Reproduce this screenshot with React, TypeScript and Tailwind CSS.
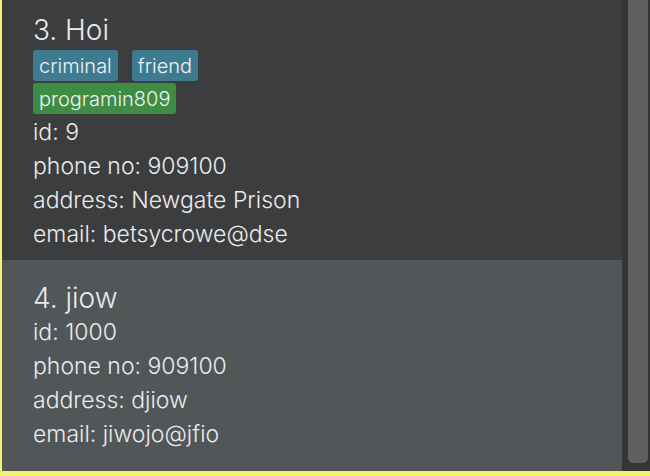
import React from "react";

const font = { fontFamily: "Inter, 'Noto Sans', sans-serif" };

function Tag({ label, color }: { label: string; color: "blue" | "green" }) {
  return (
    <span
      className={
        "inline-flex items-center h-[31px] px-[6px] rounded-[3px] text-[20px] font-light text-[#eef2f2] leading-none " +
        (color === "blue" ? "bg-[#3e7b91]" : "bg-[#3f8c45]")
      }
    >
      {label}
    </span>
  );
}

function Line({ children }: { children: React.ReactNode }) {
  return <div className="h-[34px] flex items-center text-[23px] font-light">{children}</div>;
}

export default function App() {
  return (
    <div className="w-[650px] h-[476px] bg-[#f5f26b] pl-[2px] pb-[5px] flex text-[#ebebeb]" style={font}>
      <div className="flex-1 flex flex-col overflow-hidden">
        <div className="h-[260px] bg-[#3c3d3f] pl-[31px] pt-[13px] flex flex-col">
          <div className="h-[34px] flex items-center text-[28px] font-light">3. Hoi</div>
          <div className="flex gap-[14px] mt-[3px]">
            <Tag label="criminal" color="blue" />
            <Tag label="friend" color="blue" />
          </div>
          <div className="flex mt-[2px]">
            <Tag label="programin809" color="green" />
          </div>
          <div className="mt-[1px]">
            <Line>id: 9</Line>
            <Line>phone no: 909100</Line>
            <Line>address: Newgate Prison</Line>
            <Line>email: betsycrowe@dse</Line>
          </div>
        </div>
        <div className="flex-1 bg-[#515658] pl-[31px] pt-[21px] flex flex-col">
          <div className="h-[34px] flex items-center text-[28px] font-light">4. jiow</div>
          <Line>id: 1000</Line>
          <Line>phone no: 909100</Line>
          <Line>address: djiow</Line>
          <Line>email: jiwojo@jfio</Line>
        </div>
      </div>
      <div className="w-[28px] bg-[#353535] pl-[6px] pr-[2px] pb-[8px]">
        <div className="h-full bg-[#606060] rounded-b-[5px]" />
      </div>
    </div>
  );
}
